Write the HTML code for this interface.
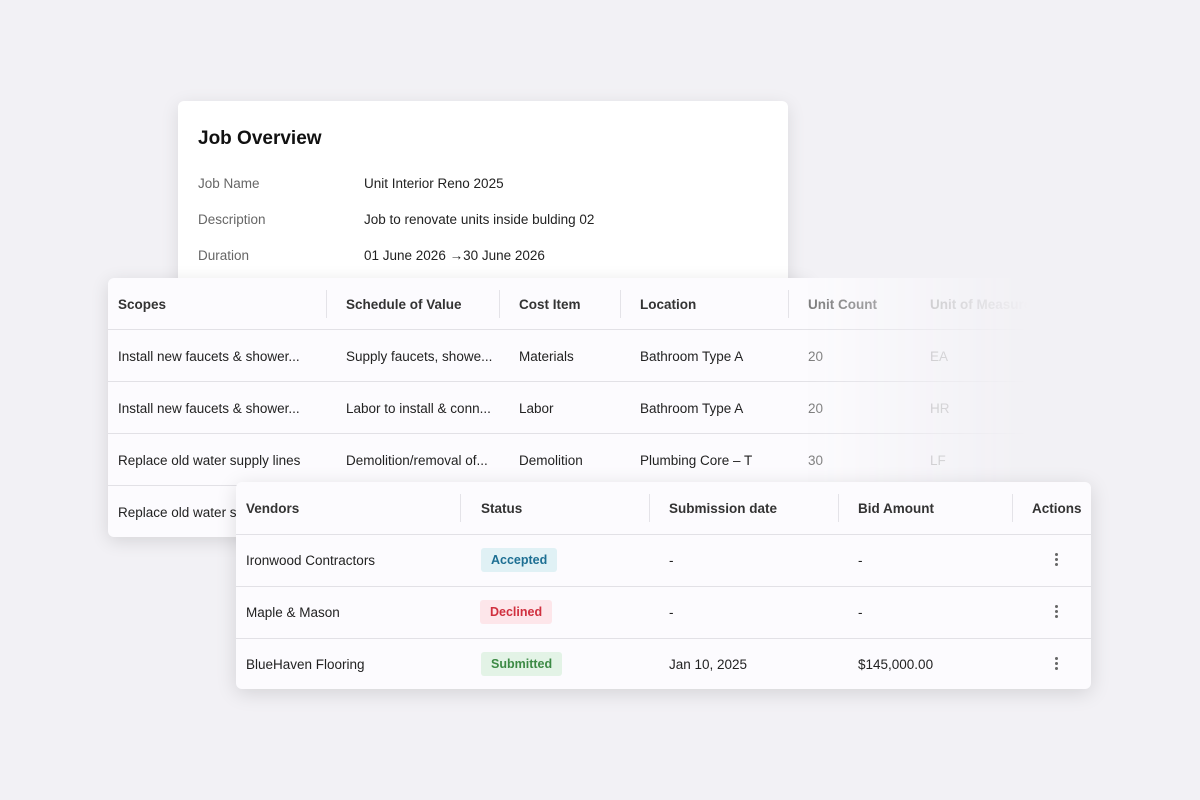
<!DOCTYPE html>
<html><head><meta charset="utf-8"><style>
*{box-sizing:border-box;margin:0;padding:0}
body{width:1200px;height:800px;background:#f2f1f5;font-family:"Liberation Sans",sans-serif;position:relative;overflow:hidden;color:#222}
.card{position:absolute;background:#fcfbfe;border-radius:6px;box-shadow:0 4px 18px rgba(0,0,0,0.10)}
.t{position:absolute;white-space:nowrap;font-size:13.5px;line-height:16px;margin-top:1px}
.h{font-weight:bold;color:#333}
.line{position:absolute;height:1px;background:#e2e1e6}
.vd{position:absolute;width:1px;height:28px;background:#e4e3e8}
.badge{position:absolute;height:24px;border-radius:3px;font-size:12.5px;font-weight:bold;line-height:24px;padding:0 10px}
.keb{position:absolute;width:3px}
.keb i{display:block;width:3px;height:3px;border-radius:50%;background:#666;margin-bottom:2px}
</style></head><body>

<div class="card" style="left:178px;top:101px;width:610px;height:200px;background:#fff">
  <div class="t" style="left:20px;top:26px;font-size:19px;line-height:22px;color:#111;font-weight:bold">Job Overview</div>
  <div class="t" style="left:20px;top:74px;color:#666">Job Name</div>
  <div class="t" style="left:186px;top:74px">Unit Interior Reno 2025</div>
  <div class="t" style="left:20px;top:110px;color:#666">Description</div>
  <div class="t" style="left:186px;top:110px">Job to renovate units inside bulding 02</div>
  <div class="t" style="left:20px;top:146px;color:#666">Duration</div>
  <div class="t" style="left:186px;top:146px">01 June 2026 →30 June 2026</div>
</div>

<div style="position:absolute;left:108px;top:278px;width:700px;height:259px;border-radius:6px;box-shadow:0 4px 18px rgba(0,0,0,0.12)"></div>
<div class="card" style="left:108px;top:278px;width:920px;height:259px;box-shadow:none;-webkit-mask-image:linear-gradient(to right,#000 0,#000 690px,rgba(0,0,0,0.35) 830px,rgba(0,0,0,0) 920px);mask-image:linear-gradient(to right,#000 0,#000 690px,rgba(0,0,0,0.35) 830px,rgba(0,0,0,0) 920px)">
  <div class="t h" style="left:10px;top:18px">Scopes</div>
  <div class="vd" style="left:218px;top:12px"></div>
  <div class="t h" style="left:238px;top:18px">Schedule of Value</div>
  <div class="vd" style="left:391px;top:12px"></div>
  <div class="t h" style="left:411px;top:18px">Cost Item</div>
  <div class="vd" style="left:512px;top:12px"></div>
  <div class="t h" style="left:532px;top:18px">Location</div>
  <div class="vd" style="left:680px;top:12px"></div>
  <div class="t h" style="left:700px;top:18px;color:#777">Unit Count</div>
  <div class="t h" style="left:822px;top:18px;color:#999">Unit of Measure</div>
  <div class="line" style="left:0;top:51px;width:920px"></div>
  <div class="line" style="left:0;top:103px;width:920px"></div>
  <div class="line" style="left:0;top:155px;width:920px"></div>
  <div class="line" style="left:0;top:207px;width:920px"></div>

  <div class="t" style="left:10px;top:70px">Install new faucets &amp; shower...</div>
  <div class="t" style="left:238px;top:70px">Supply faucets, showe...</div>
  <div class="t" style="left:411px;top:70px">Materials</div>
  <div class="t" style="left:532px;top:70px">Bathroom Type A</div>
  <div class="t" style="left:700px;top:70px;color:#777">20</div>
  <div class="t" style="left:822px;top:70px;color:#999">EA</div>

  <div class="t" style="left:10px;top:122px">Install new faucets &amp; shower...</div>
  <div class="t" style="left:238px;top:122px">Labor to install &amp; conn...</div>
  <div class="t" style="left:411px;top:122px">Labor</div>
  <div class="t" style="left:532px;top:122px">Bathroom Type A</div>
  <div class="t" style="left:700px;top:122px;color:#777">20</div>
  <div class="t" style="left:822px;top:122px;color:#999">HR</div>

  <div class="t" style="left:10px;top:174px">Replace old water supply lines</div>
  <div class="t" style="left:238px;top:174px">Demolition/removal of...</div>
  <div class="t" style="left:411px;top:174px">Demolition</div>
  <div class="t" style="left:532px;top:174px">Plumbing Core – T</div>
  <div class="t" style="left:700px;top:174px;color:#777">30</div>
  <div class="t" style="left:822px;top:174px;color:#999">LF</div>

  <div class="t" style="left:10px;top:226px">Replace old water supply lines</div>
</div>

<div class="card" style="left:236px;top:482px;width:855px;height:207px;box-shadow:0 4px 20px rgba(0,0,0,0.13)">
  <div class="t h" style="left:10px;top:18px">Vendors</div>
  <div class="vd" style="left:224px;top:12px"></div>
  <div class="t h" style="left:245px;top:18px">Status</div>
  <div class="vd" style="left:413px;top:12px"></div>
  <div class="t h" style="left:433px;top:18px">Submission date</div>
  <div class="vd" style="left:602px;top:12px"></div>
  <div class="t h" style="left:622px;top:18px">Bid Amount</div>
  <div class="vd" style="left:776px;top:12px"></div>
  <div class="t h" style="left:796px;top:18px">Actions</div>
  <div class="line" style="left:0;top:52px;width:855px"></div>
  <div class="line" style="left:0;top:104px;width:855px"></div>
  <div class="line" style="left:0;top:156px;width:855px"></div>

  <div class="t" style="left:10px;top:70px">Ironwood Contractors</div>
  <div class="badge" style="left:245px;top:66px;background:#e0f1f5;color:#1d6f93">Accepted</div>
  <div class="t" style="left:433px;top:70px">-</div>
  <div class="t" style="left:622px;top:70px">-</div>
  <div class="keb" style="left:819px;top:71px"><i></i><i></i><i></i></div>

  <div class="t" style="left:10px;top:122px">Maple &amp; Mason</div>
  <div class="badge" style="left:244px;top:118px;background:#fde6ea;color:#d0303f">Declined</div>
  <div class="t" style="left:433px;top:122px">-</div>
  <div class="t" style="left:622px;top:122px">-</div>
  <div class="keb" style="left:819px;top:123px"><i></i><i></i><i></i></div>

  <div class="t" style="left:10px;top:174px">BlueHaven Flooring</div>
  <div class="badge" style="left:245px;top:170px;background:#e3f3e6;color:#3d8a45">Submitted</div>
  <div class="t" style="left:433px;top:174px">Jan 10, 2025</div>
  <div class="t" style="left:622px;top:174px">$145,000.00</div>
  <div class="keb" style="left:819px;top:175px"><i></i><i></i><i></i></div>
</div>
</body></html>
